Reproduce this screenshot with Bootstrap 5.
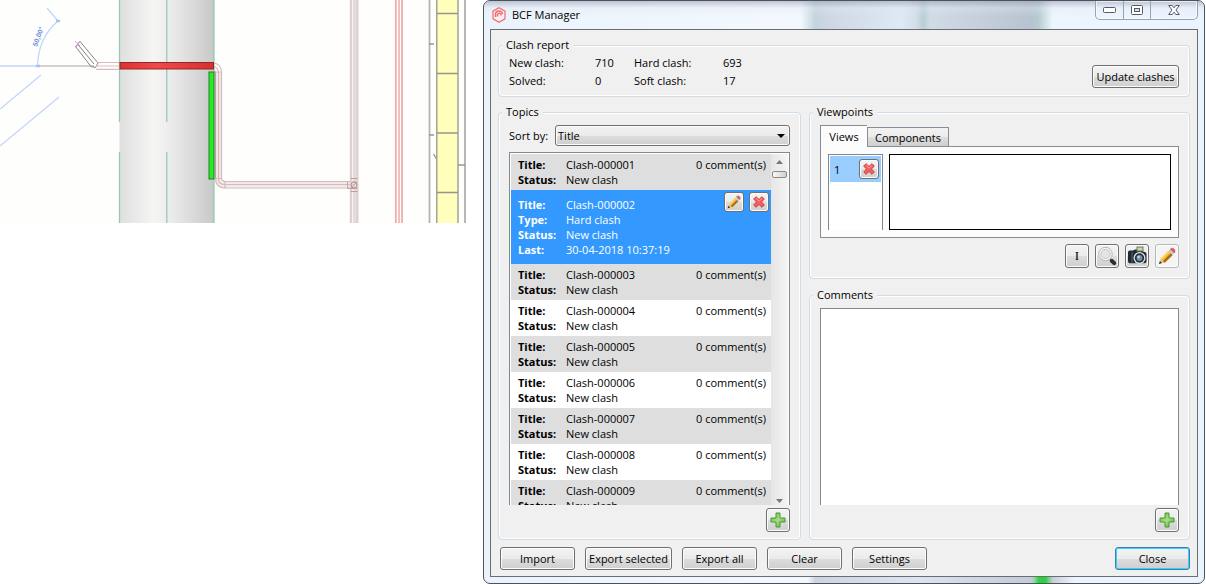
<!DOCTYPE html>
<html lang="en">
<head>
<meta charset="utf-8">
<meta name="viewport" content="width=device-width, initial-scale=1">
<title>BCF Manager</title>
<link href="https://cdn.jsdelivr.net/npm/bootstrap@5.3.0/dist/css/bootstrap.min.css" rel="stylesheet">
<style>
  body { font-family: "Open Sans", "Noto Sans", sans-serif; font-size: 11px; line-height: 15px; color: #000; background: #fff; padding-right: 1px; }
  .workspace { min-height: 100vh; gap: 17px; grid-template-columns: minmax(0, 466fr) minmax(0, 722fr); }
  .drawing-pane svg { width: 100%; height: auto; }
  .app-window { border: 1px solid #4d5259; border-radius: 7px; padding: 0 6px 6px;
    background:
      linear-gradient(90deg, transparent 76%, #2fd045 77%, #2fd045 78%, #c9ced8 79%, transparent 82%) bottom / 100% 6px no-repeat,
      linear-gradient(90deg, transparent 45%, #ccd6e2 46%, #dbe6f2 60%, #c3ccd8 76%, transparent 77%) bottom / 100% 6px no-repeat,
      linear-gradient(90deg, transparent 44%, #c4d4dc 46%, #ced8e4 48%, #dde9f5 58%, #d2dfea 60%, #b9cfd4 61%, #d0dbe6 62%, #b8c3d0 76%, #b5cdd0 77%, transparent 79%) top / 100% 28px no-repeat,
      linear-gradient(90deg, #eaf3fc, #f2f8fe 40%, #eaf4fd); }
  .title-bar { height: 28px; margin: 0 -6px; padding: 0 6px 0 8px; background: linear-gradient(rgba(150,155,180,.55), rgba(225,230,240,.35) 7px, transparent 16px); border-radius: 6px 6px 0 0; }
  .title-bar h1 { font-size: 11px; line-height: 28px; font-weight: 400; gap: 6px; }
  .caption-group { border: 1px solid #9aa1b0; border-top: 0; border-radius: 0 0 5px 5px; height: 19px; box-shadow: inset 0 0 0 1px #ffffffaa; }
  .caption-group button { border: 0; background: none; padding: 0; width: 27px; display: flex; align-items: center; justify-content: center; }
  .caption-group button + button { border-left: 1px solid #9aa1b0; }
  .caption-group button:last-child { width: 47px; }
  .client { border: 1px solid #6a6e74; background: #f0f0f0; padding: 7px 7px 6px; gap: 7px; }
  .group-box { border: 1px solid #d0dce6; border-radius: 4px; box-shadow: inset 0 0 0 1px #fff; padding: 0 10px 7px; min-width: 0; }
  .group-box legend { float: none; width: auto; font-size: 11px; line-height: 16px; padding: 0 4px; margin: 0 0 0 -7px; background: #f0f0f0; }
  .summary-box { padding-bottom: 6px; }
  .report { display: grid; grid-template-columns: 86px 39px 89px auto; line-height: 18px; margin: 0; padding-top: 1px; }
  .report dt, .entry dt { font-weight: 400; }
  .report dd, .entry dd { margin: 0; }
  .push { border: 1px solid #707070; border-radius: 3px; box-shadow: inset 0 0 0 1px #fcfcfc; background: linear-gradient(#f3f3f3, #ebebeb 50%, #dddddd 51%, #cfcfcf); color: #000; height: 23px; min-width: 75px; padding: 0 3px; line-height: 20px; white-space: nowrap; }
  .push.wide { min-width: 87px; }
  .push.update { margin-bottom: 2px; }
  .push.default { border-color: #3c7fb1; box-shadow: inset 0 0 0 1px #35d0fb; }
  .push.icon { min-width: 0; width: 24px; height: 24px; padding: 0; display: flex; align-items: center; justify-content: center; flex: none; }
  .push.small-icon { width: 20px; height: 20px; }
  .push.faded { border-color: #b8b8b8; background: #f4f4f4; }
  .serif { font-family: "Liberation Serif", serif; font-size: 13px; }
  .right-col { gap: 8px; min-width: 0; min-height: 0; }
  .columns { gap: 8px; grid-template-columns: minmax(0, 303fr) minmax(0, 381fr); grid-template-rows: minmax(0, 1fr); }
  .fill { flex: 1 1 0; min-height: 0; }
  .sort-row { padding: 5px 0 6px; gap: 7px; }
  .sort-row select { height: 21px; border: 1px solid #707070; border-radius: 3px; appearance: none; padding: 0 2px; color: #000; box-shadow: inset 0 0 0 1px #fcfcfc;
    background: url("data:image/svg+xml,%3Csvg xmlns='http://www.w3.org/2000/svg' width='8' height='4'%3E%3Cpath d='M0 0h8L4 4z'/%3E%3C/svg%3E") right 4px center no-repeat, linear-gradient(#f2f2f2, #ebebeb 50%, #dddddd 51%, #cfcfcf); }
  .topic-frame { border: 1px solid #828790; border-bottom: 0; padding: 1px 1px 0; margin: 0 0 3px; background: #fff; }
  .entries { overflow: hidden; list-style: none; margin: 0; padding: 0; min-width: 0; }
  .entries > li { display: flex; justify-content: space-between; padding: 3px 5px 3px 7px; background: #fff; }
  .entries > li:nth-child(odd) { background: #dedede; }
  .entries > li.chosen { background: #3399ff; color: #fff; padding: 2px 2px 7px 7px; }
  .chosen .entry { padding-top: 5px; }
  .entry-tools { gap: 5px; }
  .entry { display: grid; grid-template-columns: 48px auto; margin: 0; }
  .entry dt { font-weight: 700; }
  .scroll-track { width: 17px; flex: none; background: linear-gradient(90deg, #e6e6e6, #f4f4f4); padding: 6px 0 2px; }
  .thumb { width: 15px; height: 7px; border: 1px solid #8b8b8b; border-radius: 2px; background: linear-gradient(90deg, #f8f8f8, #cfcfcf); margin-top: 7px; }
  .view-tabs { padding-top: 5px; }
  .view-tabs button { border: 1px solid #898c95; border-bottom: 0; background: linear-gradient(#f2f2f2, #ebebeb 50%, #dddddd 51%, #cfcfcf); padding: 0 5px; height: 19px; line-height: 19px; color: #000; min-width: 82px; }
  .view-tabs button.active { background: #fcfcfc; height: 22px; min-width: 47px; line-height: 22px; margin-bottom: -1px; border-right: 0; position: relative; }
  .view-panel { border: 1px solid #898c95; background: #fcfcfc; padding: 7px; gap: 6px; height: 92px; }
  .view-list { width: 55px; border: 1px solid #828790; border-bottom: 0; padding: 1px; background: #fff; margin: 0; list-style: none; flex: none; }
  .view-list li { background: #99ccff; padding: 3px 2px 3px 4px; display: flex; justify-content: space-between; align-items: center; }
  .preview { border: 1px solid #000; background: #fff; }
  .tool-row { padding: 6px 0 3px; gap: 6px; }
  .comment-box { border: 1px solid #828790; border-bottom: 0; background: #fff; resize: none; margin: 5px 0 3px; outline: 0; width: 100%; }
  .actions { gap: 10px; padding: 0 0 0 2px; }
  svg { display: block; }
</style>
</head>
<body>
<svg width="0" height="0" class="position-absolute" aria-hidden="true">
  <defs>
    <linearGradient id="greenFill" x1="0" y1="0" x2="1" y2="1"><stop offset="0" stop-color="#5fb83b"/><stop offset=".5" stop-color="#a9dd86"/><stop offset="1" stop-color="#4fa82e"/></linearGradient>
    <symbol id="cross" viewBox="0 0 12 12"><path d="M3 .7 6 3.500 9 .7 11.300 3 8.500 6l2.800 3L9 11.300 6 8.500l-3 2.800L.7 9l2.800-3L.7 3z" fill="#f0605f" stroke="#d23c3e" stroke-width="1" stroke-linejoin="round"/><path d="M3 2.400 6 5.200l3-2.800" fill="none" stroke="#f99" stroke-width="1"/></symbol>
    <symbol id="plus" viewBox="0 0 16 16"><path d="M6 1h4v5h5v4h-5v5H6v-5H1V6h5z" fill="url(#greenFill)" stroke="#4a9a32" stroke-linejoin="round"/></symbol>
    <symbol id="pencil" viewBox="0 0 16 16"><path d="M.8 15.200 2.300 10.500 5.500 13.700z" fill="#e9c99a"/><path d="M.8 15.200l.9-2.800 1.900 1.900z" fill="#333"/><path d="M2.300 10.500 9.300 3.500l3.500 3.500-7 7z" fill="#f1b11d"/><path d="M4.400 12.600l7-7 1.700 1.400-7 7z" fill="#a86d14"/><path d="M2.600 10.700 9.600 3.700l.9.900-7 7z" fill="#ffd867"/><path d="M9.300 3.500l1.700-1.700 3.500 3.500-1.700 1.700z" fill="#c3c8cf"/><path d="M11 1.800c.8-.9 2.200-1 3.200 0s1.100 2.500.3 3.500z" fill="#e2525a" stroke="#c8474f" stroke-width=".5"/></symbol>
  </defs>
</svg>

<div class="workspace d-grid">
  <section class="drawing-pane" aria-label="Model view">
    <svg viewBox="0 0 466 223" role="img" aria-label="Plan drawing with clashing pipes">
      <defs>
        <linearGradient id="column"><stop offset="0" stop-color="#dfdfdf"/><stop offset=".36" stop-color="#f5f5f4"/><stop offset=".5" stop-color="#eeeeee"/><stop offset=".75" stop-color="#dcdcdc"/><stop offset="1" stop-color="#c8c8c8"/></linearGradient>
        <linearGradient id="beam"><stop offset="0" stop-color="#e03030"/><stop offset=".4" stop-color="#f04a48"/><stop offset="1" stop-color="#d92f2f"/></linearGradient>
      </defs>
      <rect width="466" height="223" fill="#fefefd"/>
      <rect x="119.500" width="94.500" height="223" fill="url(#column)"/>
      <path d="M119.500 0v122M119.500 152v71M166.800 0v122M166.800 152v71M214 0v223" stroke="#98c9b2" stroke-width="1.300" fill="none"/>
      <g stroke="#c3d4fb" stroke-width="1.300" fill="none">
        <path d="M0 66h38M47 8l11 13M37.500 66C38 48 45 32 58 21M0 109l41-34M0 146l59-49"/>
        <path d="M56 21h4M36 66h4" stroke="#a9c0f8" stroke-width="2.500"/>
      </g>
      <text transform="translate(37 47) rotate(-70)" font-family="Liberation Sans" font-size="7" font-weight="700" fill="#7393e0">50,00°</text>
      <path d="M40 66h54" stroke="#aaa3a1" stroke-width="1.200"/>
      <g fill="none">
        <path d="M75.500 46.500 91 66.500M77.500 44 94 64M80 41.500 98 63M75.500 46.500 80 41.500M91 66.500l4.500 1 2.500-4.500" stroke="#8a8584" stroke-width="1"/>
        <path d="M75 41l5 5M80 41l-4 6" stroke="#cf9bd3" stroke-width="1"/>
        <path d="M97 62.500h22M96 66h23M96 69.300h23" stroke="#dbbcbc" stroke-width="1.200"/>
        <g stroke="#f1eaea" stroke-width="6"><path d="M218.500 72v107q0 5.500 6 5.500h130"/></g>
        <g stroke="#d6babb" stroke-width="1.200">
          <path d="M214 63q7 1 7.500 9v106q0 3 4 3.500h131"/>
          <path d="M214 66.500q3.500 1 4.500 5.500v107q0 5.500 6 5.500h130"/>
          <path d="M214.500 70l1 2v106q0 10 9.500 10h130"/>
          <path d="M215 72h7M215 178.500h7M225 181v7.500"/>
        </g>
        <path d="M351 0v223M357.300 0v223" stroke="#ddd1d0" stroke-width="2.500"/>
        <path d="M353.500 0v223" stroke="#dedbe1" stroke-width="1"/>
        <path d="M355 0v223" stroke="#cfb9ba" stroke-width="1"/>
        <circle cx="354" cy="185" r="3" stroke="#b98e91"/><path d="M347.500 182v6.500h10M350.500 178.500h7M350.500 191.500h7M351 188l6-6" stroke="#c49da0"/>
        <path d="M395.800 0v223M402 0v223" stroke="#f3acac" stroke-width="1.800"/><path d="M399 0v223" stroke="#eebbbb" stroke-width="1.800"/>
      </g>
      <rect x="120" y="62.500" width="93.500" height="6.500" fill="url(#beam)" stroke="#912828"/>
      <rect x="209" y="72" width="5" height="107" fill="#25ec25" stroke="#267a2b"/>
      <path d="M215.500 72v106" stroke="#c79ba0"/>
      <rect x="436.500" width="22" height="223" fill="#ffffbb"/>
      <g stroke="#96958f" stroke-width="1.300" fill="none">
        <path d="M436.800 0v223M458 0v223M437 13.500h21M437 73.500h21M437 133h21M437 192.500h21"/>
        <path d="M429.500 0v223" stroke="#b5b5b5" stroke-width="1.800"/><path d="M465 0v223" stroke="#b0b0b0" stroke-width="1.800"/>
        <path d="M429 44h5M429 135h5M458 165h7M433.500 154l3 5"/>
      </g>
    </svg>
  </section>

  <main class="app-window d-flex flex-column">
    <header class="title-bar d-flex justify-content-between align-items-start">
      <h1 class="d-flex align-items-center m-0">
        <svg width="14" height="16" viewBox="0 0 14 16" fill="none" stroke="#f06b70" aria-hidden="true"><path d="M7 .8 13 4.200v7.600L7 15.200 1 11.800V4.200z" fill="#fdeff1" stroke-width="1.200"/><path d="M3.500 10V7.500C3.500 3 10.500 3 10.500 7M5.500 9.500V8C5.500 5.500 9 5.800 9 7.500v1" stroke-width="1.500"/></svg>
        BCF Manager
      </h1>
      <div class="caption-group d-flex">
        <button type="button" aria-label="Minimize"><svg width="13" height="6"><rect x=".5" y=".5" width="12" height="5" rx="1" fill="#fff" stroke="#555a68"/></svg></button>
        <button type="button" aria-label="Maximize"><svg width="12" height="10"><rect x=".5" y=".5" width="11" height="9" rx="1" fill="#fff" stroke="#555a68"/><rect x="3.500" y="3.500" width="5" height="3" fill="#d5deea" stroke="#555a68"/></svg></button>
        <button type="button" aria-label="Close window"><svg width="12" height="10" viewBox="0 0 12 10"><path d="M.7.500h3.500L6 2.800 7.800.500h3.500L8 5l3.300 4.500H7.800L6 7.200 4.200 9.500H.7L4 5z" fill="#fff" stroke="#555a68"/></svg></button>
      </div>
    </header>

    <div class="client d-flex flex-column flex-grow-1">
      <fieldset class="group-box summary-box">
        <legend>Clash report</legend>
        <div class="d-flex justify-content-between align-items-end">
          <dl class="report">
            <dt>New clash:</dt><dd>710</dd><dt>Hard clash:</dt><dd>693</dd>
            <dt>Solved:</dt><dd>0</dd><dt>Soft clash:</dt><dd>17</dd>
          </dl>
          <button type="button" class="push wide update">Update clashes</button>
        </div>
      </fieldset>

      <div class="columns fill d-grid">
        <fieldset class="group-box d-flex flex-column">
          <legend>Topics</legend>
          <div class="sort-row d-flex align-items-center">
            <label for="sortBy">Sort by:</label>
            <select id="sortBy" class="flex-grow-1"><option>Title</option><option>Status</option></select>
          </div>
          <div class="topic-frame fill d-flex">
            <ul class="entries flex-grow-1">
              <li><dl class="entry"><dt>Title:</dt><dd>Clash-000001</dd><dt>Status:</dt><dd>New clash</dd></dl><span>0 comment(s)</span></li>
              <li class="chosen">
                <dl class="entry"><dt>Title:</dt><dd>Clash-000002</dd><dt>Type:</dt><dd>Hard clash</dd><dt>Status:</dt><dd>New clash</dd><dt>Last:</dt><dd>30-04-2018 10:37:19</dd></dl>
                <div class="entry-tools d-flex">
                  <button type="button" class="push icon small-icon" aria-label="Edit topic"><svg width="14" height="14"><use href="#pencil"/></svg></button>
                  <button type="button" class="push icon small-icon" aria-label="Delete topic"><svg width="12" height="12"><use href="#cross"/></svg></button>
                </div>
              </li>
              <li><dl class="entry"><dt>Title:</dt><dd>Clash-000003</dd><dt>Status:</dt><dd>New clash</dd></dl><span>0 comment(s)</span></li>
              <li><dl class="entry"><dt>Title:</dt><dd>Clash-000004</dd><dt>Status:</dt><dd>New clash</dd></dl><span>0 comment(s)</span></li>
              <li><dl class="entry"><dt>Title:</dt><dd>Clash-000005</dd><dt>Status:</dt><dd>New clash</dd></dl><span>0 comment(s)</span></li>
              <li><dl class="entry"><dt>Title:</dt><dd>Clash-000006</dd><dt>Status:</dt><dd>New clash</dd></dl><span>0 comment(s)</span></li>
              <li><dl class="entry"><dt>Title:</dt><dd>Clash-000007</dd><dt>Status:</dt><dd>New clash</dd></dl><span>0 comment(s)</span></li>
              <li><dl class="entry"><dt>Title:</dt><dd>Clash-000008</dd><dt>Status:</dt><dd>New clash</dd></dl><span>0 comment(s)</span></li>
              <li><dl class="entry"><dt>Title:</dt><dd>Clash-000009</dd><dt>Status:</dt><dd>New clash</dd></dl><span>0 comment(s)</span></li>
            </ul>
            <div class="scroll-track d-flex flex-column align-items-center" aria-hidden="true">
              <svg width="7" height="4"><path d="M0 4h7L3.500 0z" fill="#777"/></svg>
              <div class="thumb"></div>
              <svg class="mt-auto" width="7" height="4"><path d="M0 0h7L3.500 4z" fill="#777"/></svg>
            </div>
          </div>
          <button type="button" class="push icon align-self-end" aria-label="Add topic"><svg width="16" height="16"><use href="#plus"/></svg></button>
        </fieldset>

        <div class="right-col d-flex flex-column">
          <fieldset class="group-box">
            <legend>Viewpoints</legend>
            <div class="view-tabs d-flex align-items-end" role="tablist">
              <button type="button" role="tab" class="active" aria-selected="true">Views</button>
              <button type="button" role="tab" aria-selected="false">Components</button>
            </div>
            <div class="view-panel d-flex">
              <ul class="view-list">
                <li>1 <button type="button" class="push icon small-icon" aria-label="Delete view"><svg width="12" height="12"><use href="#cross"/></svg></button></li>
              </ul>
              <div class="preview flex-grow-1"></div>
            </div>
            <div class="tool-row d-flex justify-content-end">
              <button type="button" class="push icon serif">I</button>
              <button type="button" class="push icon" aria-label="Zoom to view"><svg width="20" height="20" viewBox="0 0 20 20"><path d="M12.500 12.500l2 2" stroke="#999" stroke-width="2"/><path d="M14.800 14.800l2.400 2.400" stroke="#2e2e2e" stroke-width="4" stroke-linecap="round"/><circle cx="8.500" cy="8" r="6.700" fill="#f8f8f8" stroke="#b4b4b4" stroke-width="1"/><circle cx="8.500" cy="8" r="4.600" fill="#e3e5e4" stroke="#c4c4c4" stroke-width="1"/></svg></button>
              <button type="button" class="push icon" aria-label="Take snapshot"><svg width="20" height="20" viewBox="0 0 20 20"><path d="M1 6q0-1.500 2-1.500h3L8 3.500h7l1 2 2.500.8q1 .5 1 2v7q0 2-2 2H3q-2 0-2-2z" fill="#1e2a32"/><path d="M5 6v11" stroke="#55646d"/><rect x="10" y="1" width="6" height="4" fill="#cdd79a" stroke="#707a5c"/><circle cx="12.500" cy="12" r="6" fill="#dfe6ea"/><circle cx="12.500" cy="12" r="4.700" fill="#24313a"/><circle cx="12.500" cy="12" r="2.900" fill="#7690a6"/><circle cx="11.500" cy="11" r="1.200" fill="#c8dae7"/></svg></button>
              <button type="button" class="push icon faded" aria-label="Edit viewpoint"><svg width="18" height="18"><use href="#pencil"/></svg></button>
            </div>
          </fieldset>
          <fieldset class="group-box fill d-flex flex-column">
            <legend>Comments</legend>
            <textarea class="comment-box fill" aria-label="Comments"></textarea>
            <button type="button" class="push icon align-self-end" aria-label="Add comment"><svg width="16" height="16"><use href="#plus"/></svg></button>
          </fieldset>
        </div>
      </div>

      <div class="actions d-flex">
        <button type="button" class="push">Import</button>
        <button type="button" class="push wide">Export selected</button>
        <button type="button" class="push">Export all</button>
        <button type="button" class="push">Clear</button>
        <button type="button" class="push">Settings</button>
        <button type="button" class="push default ms-auto">Close</button>
      </div>
    </div>
  </main>
</div>
<script src="https://cdn.jsdelivr.net/npm/bootstrap@5.3.0/dist/js/bootstrap.bundle.min.js"></script>
</body>
</html>
